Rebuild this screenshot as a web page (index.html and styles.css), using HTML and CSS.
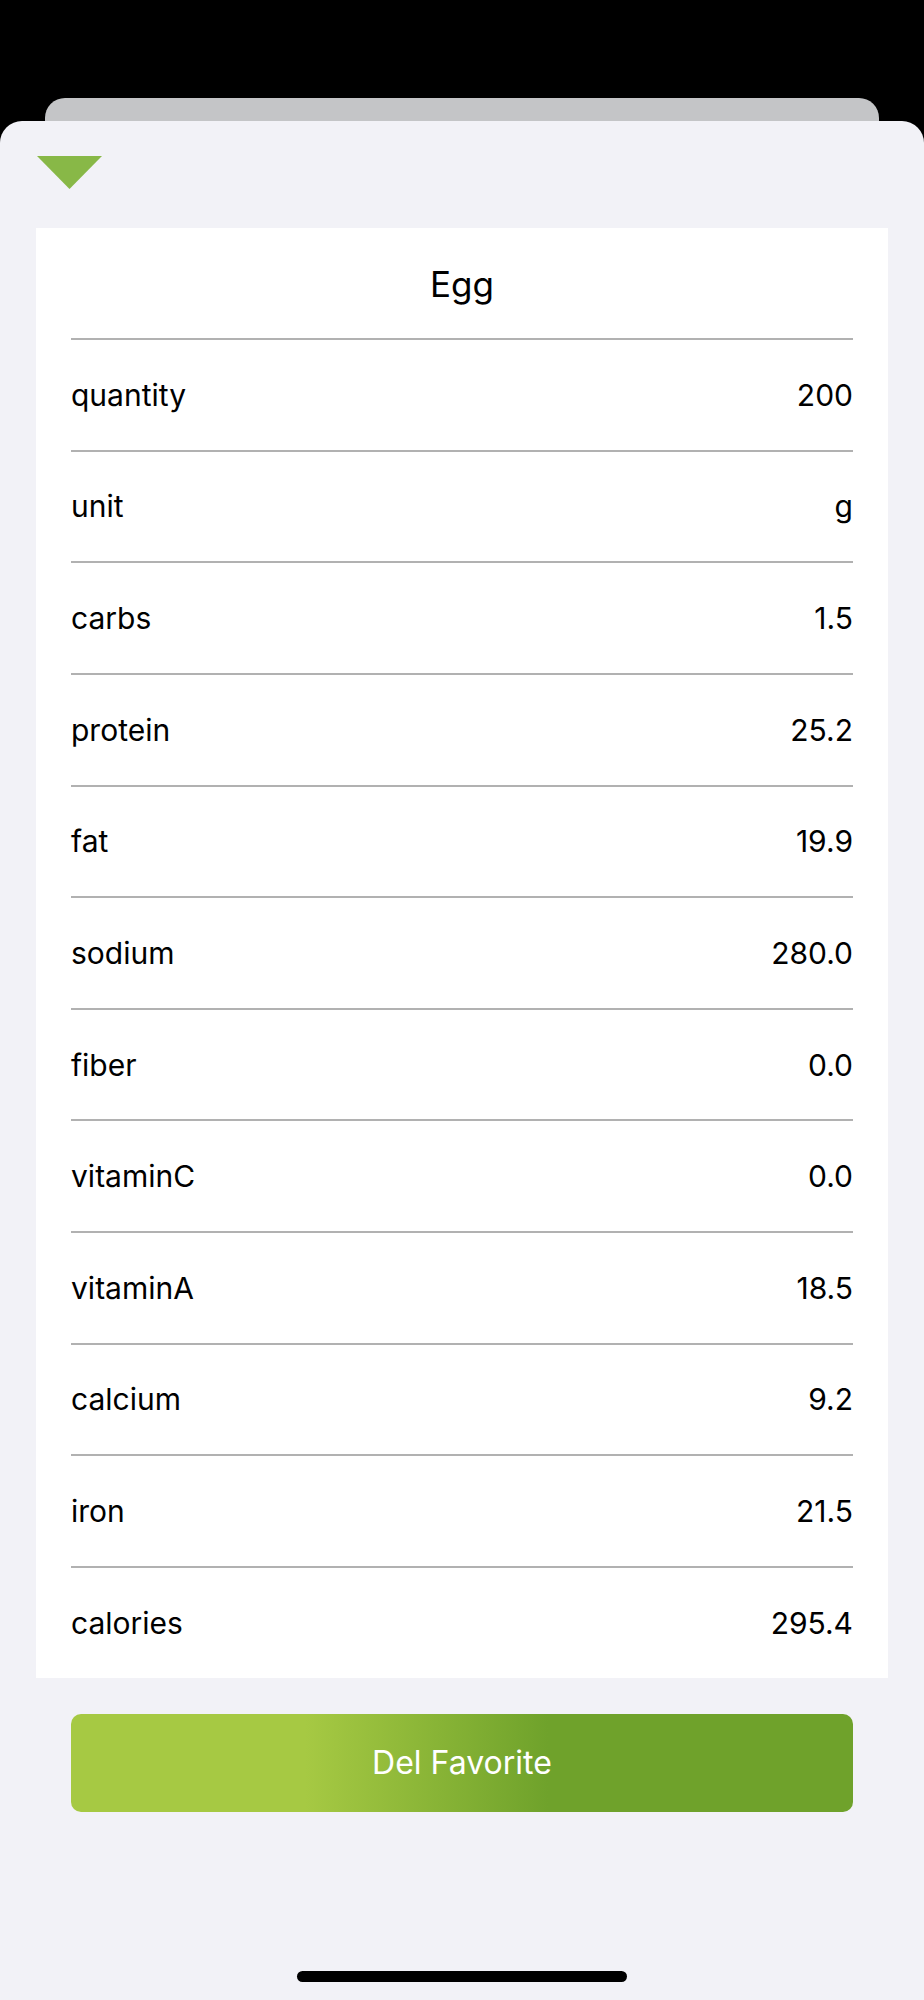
FILE: index.html
```html
<!DOCTYPE html>
<html>
<head>
<meta charset="utf-8">
<link rel="stylesheet" href="styles.css">
</head>
<body>
<div class="screen">
  <div class="back-card"></div>
  <div class="sheet">
    <div class="handle">
      <svg width="65" height="33" viewBox="0 0 65 33"><polygon points="0,0 65,0 32.5,33" fill="#88b847"/></svg>
    </div>
    <div class="card">
      <div class="title">Egg</div>
      <div class="row"><span>quantity</span><span>200</span></div>
      <div class="row"><span>unit</span><span>g</span></div>
      <div class="row"><span>carbs</span><span>1.5</span></div>
      <div class="row"><span>protein</span><span>25.2</span></div>
      <div class="row"><span>fat</span><span>19.9</span></div>
      <div class="row"><span>sodium</span><span>280.0</span></div>
      <div class="row"><span>fiber</span><span>0.0</span></div>
      <div class="row"><span>vitaminC</span><span>0.0</span></div>
      <div class="row"><span>vitaminA</span><span>18.5</span></div>
      <div class="row"><span>calcium</span><span>9.2</span></div>
      <div class="row"><span>iron</span><span>21.5</span></div>
      <div class="row"><span>calories</span><span>295.4</span></div>
    </div>
    <div class="btn-wrap"><div class="btn">Del Favorite</div></div>
    <div class="home-bar"></div>
  </div>
</div>
</body>
</html>
```
FILE: styles.css
```css
html, body {
  margin: 0;
  padding: 0;
  background: #000;
}
.screen {
  width: 924px;
  height: 2000px;
  padding-top: 98px;
  box-sizing: border-box;
  display: flex;
  flex-direction: column;
  font-family: Inter, "Liberation Sans", sans-serif;
  color: #000;
}
.back-card {
  height: 23px;
  margin: 0 45px;
  background: #c4c5c7;
  border-radius: 20px 20px 0 0;
}
.sheet {
  flex: 1;
  background: #f2f2f7;
  border-radius: 22px 22px 0 0;
  display: flex;
  flex-direction: column;
}
.handle {
  margin: 35px 0 0 37px;
  height: 33px;
  display: flex;
}
.card {
  margin: 39px 36px 0 36px;
  background: #fff;
  padding: 0 35px;
}
.title {
  height: 110px;
  display: flex;
  align-items: center;
  justify-content: center;
  font-size: 35px;
  padding-top: 2px;
  box-sizing: border-box;
}
.row {
  height: 111.64px;
  box-sizing: border-box;
  border-top: 2px solid #b1b1b1;
  display: flex;
  align-items: center;
  justify-content: space-between;
  font-size: 30px;
}
.row:last-child {
  height: 112px;
}
.btn-wrap {
  margin: 36px 71px 0 71px;
}
.btn {
  height: 98px;
  border-radius: 10px;
  background: linear-gradient(90deg, #a6c943 0%, #a6c943 30%, #6fa22b 61%, #6fa22b 100%);
  color: #fff;
  font-size: 32px;
  display: flex;
  align-items: center;
  justify-content: center;
}
.home-bar {
  margin: 159px auto 0 auto;
  width: 330px;
  height: 11px;
  border-radius: 6px;
  background: #000;
}
```
